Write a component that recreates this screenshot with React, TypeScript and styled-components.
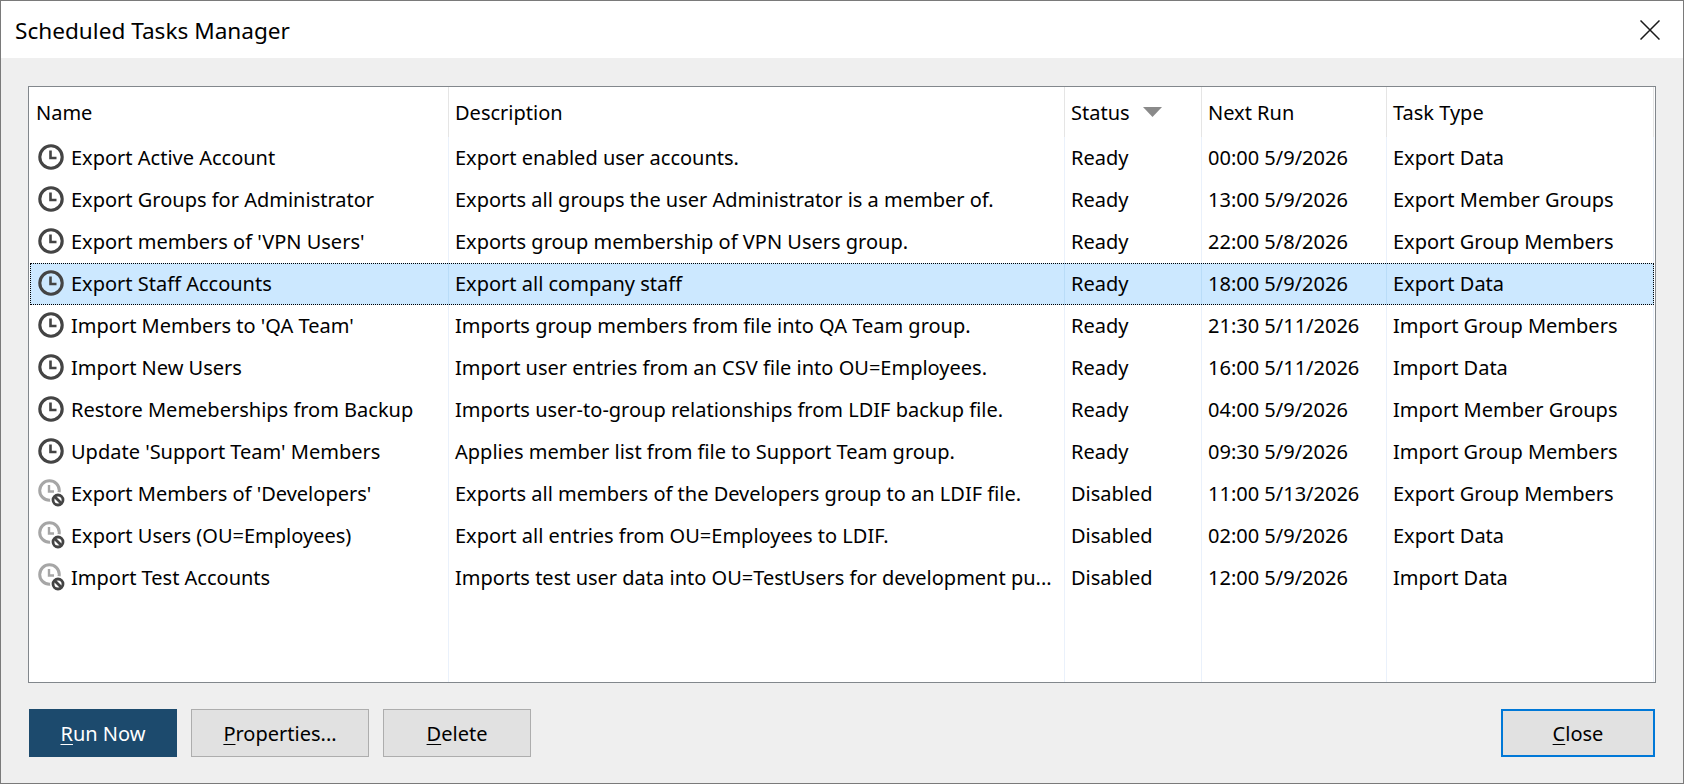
import React from 'react';
import styled, { createGlobalStyle } from 'styled-components';

const GlobalStyle = createGlobalStyle`
    html, body {
        margin: 0;
        padding: 0;
        height: 100%;
        background: #efefef;
    }
    #root {
        height: 100%;
    }
`;

const COLUMNS = '419px 616px 137px 185px 267px';

const Dialog = styled.div`
    box-sizing: border-box;
    display: flex;
    flex-direction: column;
    width: 1684px;
    height: 784px;
    border: 1px solid #7a7a7a;
    background: #efefef;
    color: #000;
    font-family: 'Noto Sans', 'Liberation Sans', sans-serif;
    font-size: 20px;
`;

const TitleBar = styled.div`
    display: flex;
    align-items: center;
    justify-content: space-between;
    box-sizing: border-box;
    height: 57px;
    padding: 1px 23px 0 14px;
    background: #fff;
    font-size: 22.6px;
`;

const CloseIcon = styled.svg`
    width: 20px;
    height: 20px;
`;

const Content = styled.div`
    flex: 1;
    display: flex;
    flex-direction: column;
    padding: 28px 27px 26px 27px;
`;

const ListBox = styled.div`
    flex: 1;
    display: flex;
    flex-direction: column;
    padding: 0 1px;
    border: 1px solid #82878c;
    background: #fff;
`;

const Row = styled.div<{ $selected?: boolean }>`
    display: grid;
    grid-template-columns: ${COLUMNS};
    height: 42px;
    align-items: stretch;
    background: ${({ $selected }) => ($selected ? '#cce8ff' : 'transparent')};
    outline: ${({ $selected }) => ($selected ? '1px dotted #000' : 'none')};
    outline-offset: -1px;

    ${({ $selected }) => ($selected ? '& > div { border-right-color: #b9dcf8; }' : '')}
`;

const HeaderRow = styled(Row)`
    height: 50px;
`;

const FillRow = styled(Row)`
    flex: 1;
    height: auto;
`;

const Cell = styled.div`
    display: flex;
    align-items: center;
    gap: 5px;
    padding: 0 5px 2px 6px;
    white-space: nowrap;
    overflow: hidden;
    border-right: 1px solid #eaf1fb;
`;

const NameCell = styled(Cell)`
    padding-left: 8px;
`;

const HeaderCell = styled(Cell)`
    padding-bottom: 0;
    border-right-color: #e5e5e5;
`;

const HeaderName = styled(HeaderCell)`
    padding-left: 6px;
`;

const SortArrow = styled.svg`
    width: 19px;
    height: 10px;
    margin-left: 8px;
`;

const Footer = styled.div`
    display: flex;
    gap: 14px;
    margin-top: 26px;
    padding: 0 1px;
`;

const Button = styled.div<{ $width: number; $primary?: boolean; $focused?: boolean }>`
    box-sizing: border-box;
    display: flex;
    align-items: center;
    justify-content: center;
    width: ${({ $width }) => $width}px;
    height: 48px;
    background: ${({ $primary }) => ($primary ? '#1c4a6d' : '#e1e1e1')};
    color: ${({ $primary }) => ($primary ? '#fff' : '#000')};
    border: ${({ $primary, $focused }) =>
        $primary ? '1px solid #1c4a6d' : $focused ? '2px solid #0078d7' : '1px solid #adadad'};
    margin-left: ${({ $focused }) => ($focused ? 'auto' : '0')};
`;

const Key = styled.span`
    text-decoration: underline;
    text-underline-offset: 3px;
    text-decoration-thickness: 1px;
`;

const IconSvg = styled.svg`
    flex: none;
    filter: blur(0.5px);
`;

const ClockIcon = ({ disabled }: { disabled?: boolean }) =>
    disabled ? (
        <IconSvg width="28" height="28" viewBox="0 0 28 28">
            <circle cx="11.5" cy="11.5" r="9.8" fill="none" stroke="#a6a6a6" strokeWidth="3" />
            <path d="M11 6 V12.5 H16" fill="none" stroke="#a6a6a6" strokeWidth="2.4" />
            <circle cx="20" cy="21" r="8" fill="#fff" />
            <circle cx="20" cy="21" r="5" fill="none" stroke="#444" strokeWidth="2.8" />
            <path d="M16.5 17.5 L23.5 24.5" stroke="#444" strokeWidth="2.8" />
        </IconSvg>
    ) : (
        <IconSvg width="28" height="28" viewBox="0 0 28 28">
            <circle cx="13" cy="14" r="11.2" fill="none" stroke="#444" strokeWidth="3.1" />
            <path d="M12.5 7.5 V15 H18.5" fill="none" stroke="#444" strokeWidth="2.6" />
        </IconSvg>
    );

type Task = {
    name: string;
    description: string;
    status: string;
    nextRun: string;
    type: string;
    selected?: boolean;
};

const tasks: Task[] = [
    { name: 'Export Active Account', description: 'Export enabled user accounts.', status: 'Ready', nextRun: '00:00 5/9/2026', type: 'Export Data' },
    { name: 'Export Groups for Administrator', description: 'Exports all groups the user Administrator is a member of.', status: 'Ready', nextRun: '13:00 5/9/2026', type: 'Export Member Groups' },
    { name: "Export members of 'VPN Users'", description: 'Exports group membership of VPN Users group.', status: 'Ready', nextRun: '22:00 5/8/2026', type: 'Export Group Members' },
    { name: 'Export Staff Accounts', description: 'Export all company staff', status: 'Ready', nextRun: '18:00 5/9/2026', type: 'Export Data', selected: true },
    { name: "Import Members to 'QA Team'", description: 'Imports group members from file into QA Team group.', status: 'Ready', nextRun: '21:30 5/11/2026', type: 'Import Group Members' },
    { name: 'Import New Users', description: 'Import user entries from an CSV file into OU=Employees.', status: 'Ready', nextRun: '16:00 5/11/2026', type: 'Import Data' },
    { name: 'Restore Memeberships from Backup', description: 'Imports user-to-group relationships from LDIF backup file.', status: 'Ready', nextRun: '04:00 5/9/2026', type: 'Import Member Groups' },
    { name: "Update 'Support Team' Members", description: 'Applies member list from file to Support Team group.', status: 'Ready', nextRun: '09:30 5/9/2026', type: 'Import Group Members' },
    { name: "Export Members of 'Developers'", description: 'Exports all members of the Developers group to an LDIF file.', status: 'Disabled', nextRun: '11:00 5/13/2026', type: 'Export Group Members' },
    { name: 'Export Users (OU=Employees)', description: 'Export all entries from OU=Employees to LDIF.', status: 'Disabled', nextRun: '02:00 5/9/2026', type: 'Export Data' },
    { name: 'Import Test Accounts', description: 'Imports test user data into OU=TestUsers for development pu...', status: 'Disabled', nextRun: '12:00 5/9/2026', type: 'Import Data' },
];

const App = () => {
    return (
        <Dialog>
            <GlobalStyle />
            <TitleBar>
                <span>Scheduled Tasks Manager</span>
                <CloseIcon viewBox="0 0 20 20">
                    <path d="M0.5 0.5 L19.5 19.5 M19.5 0.5 L0.5 19.5" stroke="#1a1a1a" strokeWidth="1.5" fill="none" />
                </CloseIcon>
            </TitleBar>
            <Content>
                <ListBox>
                    <HeaderRow>
                        <HeaderName>Name</HeaderName>
                        <HeaderCell>Description</HeaderCell>
                        <HeaderCell>
                            Status
                            <SortArrow viewBox="0 0 19 10">
                                <path d="M0 0 H19 L9.5 10 Z" fill="#8a8a8a" />
                            </SortArrow>
                        </HeaderCell>
                        <HeaderCell>Next Run</HeaderCell>
                        <HeaderCell>Task Type</HeaderCell>
                    </HeaderRow>
                    {tasks.map((task) => (
                        <Row key={task.name} $selected={task.selected}>
                            <NameCell>
                                <ClockIcon disabled={task.status === 'Disabled'} />
                                {task.name}
                            </NameCell>
                            <Cell>{task.description}</Cell>
                            <Cell>{task.status}</Cell>
                            <Cell>{task.nextRun}</Cell>
                            <Cell>{task.type}</Cell>
                        </Row>
                    ))}
                    <FillRow>
                        <Cell />
                        <Cell />
                        <Cell />
                        <Cell />
                        <Cell />
                    </FillRow>
                </ListBox>
                <Footer>
                    <Button $width={148} $primary>
                        <span>
                            <Key>R</Key>un Now
                        </span>
                    </Button>
                    <Button $width={178}>
                        <span>
                            <Key>P</Key>roperties...
                        </span>
                    </Button>
                    <Button $width={148}>
                        <span>
                            <Key>D</Key>elete
                        </span>
                    </Button>
                    <Button $width={154} $focused>
                        <span>
                            <Key>C</Key>lose
                        </span>
                    </Button>
                </Footer>
            </Content>
        </Dialog>
    );
};

export default App;
